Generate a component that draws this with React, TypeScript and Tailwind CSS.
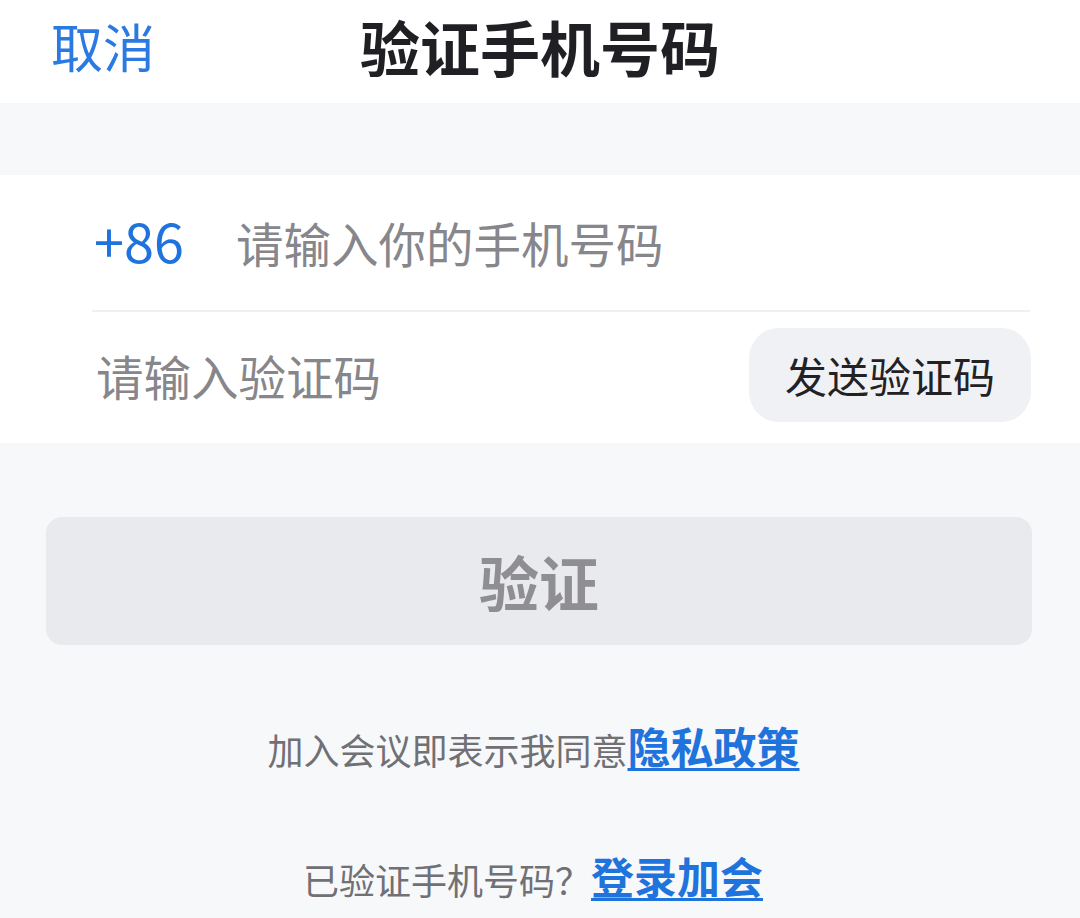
import React from "react";

const font = { fontFamily: '"Noto Sans CJK SC", "Noto Sans", sans-serif' };

export default function App() {
  return (
    <div
      className="w-[1080px] h-[918px] overflow-hidden bg-[#f7f8fa] flex flex-col"
      style={font}
    >
      {/* Header */}
      <div className="h-[103px] bg-white grid grid-cols-[1fr_auto_1fr] items-center">
        <div className="pl-[51px] text-[52px] leading-none text-[#2a7ae2] -mt-[12px]">取消</div>
        <div className="text-[60px] leading-none font-bold text-[#1f1f24] -mt-[12px]">验证手机号码</div>
        <div />
      </div>

      {/* Spacer band */}
      <div className="h-[72px]" />

      {/* Form */}
      <div className="bg-white flex flex-col">
        <div className="h-[135px] flex items-center pl-[94px]">
          <span className="text-[54px] leading-none text-[#1f73dd] w-[142px] -mt-[6px]">+86</span>
          <span className="text-[47.5px] leading-none text-[#86868b]">请输入你的手机号码</span>
        </div>
        <div className="ml-[92px] mr-[50px] h-[2px] bg-[#eff0f2]" />
        <div className="h-[131px] flex items-center justify-between pl-[96px] pr-[49px]">
          <span className="text-[47.5px] leading-none text-[#86868b] -mt-[4px]">请输入验证码</span>
          <div className="w-[282px] h-[94px] rounded-[30px] bg-[#f0f1f4] flex items-center justify-center -mt-[6px]">
            <span className="text-[42px] leading-none text-[#222226]">发送验证码</span>
          </div>
        </div>
      </div>

      {/* Verify button */}
      <div className="mt-[74px] ml-[46px] mr-[48px] h-[128px] rounded-[16px] bg-[#e9eaee] flex items-center justify-center">
        <span className="text-[60px] leading-none font-bold text-[#8e8e93]">验证</span>
      </div>

      {/* Footer texts */}
      <div className="mt-[79px] flex justify-center items-end leading-none pr-[13px]">
        <span className="text-[36px] text-[#707075]">加入会议即表示我同意</span>
        <span className="text-[43px] font-bold text-[#1f73dd] underline underline-offset-[4px] decoration-[3px]">隐私政策</span>
      </div>
      <div className="mt-[87px] flex justify-center items-end leading-none pr-[14px]">
        <span className="text-[36px] text-[#707075]">已验证手机号码？</span>
        <span className="text-[43px] font-bold text-[#1f73dd] underline underline-offset-[4px] decoration-[3px]">登录加会</span>
      </div>
    </div>
  );
}
